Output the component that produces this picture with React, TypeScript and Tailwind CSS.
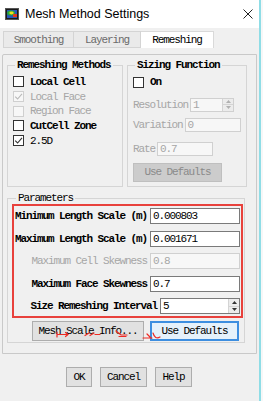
import type { ReactNode } from "react";

const txt = "font-['Liberation_Mono',monospace] text-[11px] tracking-[-1.1px] leading-[12px]";

function Check({ checked, disabled }: { checked?: boolean; disabled?: boolean }) {
  return (
    <span
      className={`flex h-[11px] w-[11px] shrink-0 items-center justify-center border ${
        disabled ? "border-[#cfcfcf] bg-[#f7f7f7]" : "border-[#333] bg-white"
      }`}
    >
      {checked && (
        <svg width="9" height="9" viewBox="0 0 9 9">
          <path
            d="M1.2 4.6 L3.6 7 L8 1.8"
            fill="none"
            stroke={disabled ? "#b9b9b9" : "#333"}
            strokeWidth="1.1"
          />
        </svg>
      )}
    </span>
  );
}

function CheckRow({
  label,
  checked,
  disabled,
  bold,
}: {
  label: string;
  checked?: boolean;
  disabled?: boolean;
  bold?: boolean;
}) {
  return (
    <div className="flex h-[14.7px] items-center gap-[6px]">
      <Check checked={checked} disabled={disabled} />
      <span className={`${txt} ${disabled ? "text-[#a6a6a6]" : "text-black"} ${bold ? "font-bold" : ""}`}>
        {label}
      </span>
    </div>
  );
}

function Spin({ disabled }: { disabled?: boolean }) {
  const c = disabled ? "#b0b0b0" : "#333";
  return (
    <div className="flex h-full w-[11px] flex-col border-l border-[#d4d4d4] bg-[#ececec]">
      <div className="flex flex-1 items-center justify-center border-b border-[#d4d4d4]">
        <svg width="5" height="3" viewBox="0 0 5 3">
          <path d="M0 3 L2.5 0 L5 3Z" fill={c} />
        </svg>
      </div>
      <div className="flex flex-1 items-center justify-center">
        <svg width="5" height="3" viewBox="0 0 5 3">
          <path d="M0 0 L2.5 3 L5 0Z" fill={c} />
        </svg>
      </div>
    </div>
  );
}

function Field({
  value,
  width,
  disabled,
  spin,
  h = "h-[16px]",
}: {
  value: string;
  width: string;
  disabled?: boolean;
  spin?: boolean;
  h?: string;
}) {
  return (
    <div
      className={`flex ${h} ${width} items-stretch border ${
        disabled ? "border-[#d0d0d0] bg-[#f7f7f7]" : "border-[#7a7a7a] bg-white"
      }`}
    >
      <span className={`${txt} flex flex-1 items-center pl-[2px] ${disabled ? "text-[#a6a6a6]" : "text-black"}`}>
        {value}
      </span>
      {spin && <Spin disabled={disabled} />}
    </div>
  );
}

function ParamRow({
  label,
  children,
  disabled,
}: {
  label: string;
  children: ReactNode;
  disabled?: boolean;
}) {
  return (
    <div className="flex items-center justify-end gap-[3px] pr-[1px]">
      <span className={`${txt} whitespace-nowrap ${disabled ? "text-[#a6a6a6]" : "font-bold text-black"}`}>
        {label}
      </span>
      {children}
    </div>
  );
}

function Btn({ children, w, focus }: { children: ReactNode; w: string; focus?: boolean }) {
  return (
    <div
      className={`flex h-[20px] ${w} items-center justify-center ${
        focus ? "border-2 border-[#3d8ee0] bg-[#e5f1fb]" : "border border-[#adadad] bg-[#e1e1e1]"
      }`}
    >
      <span className={`${txt} text-black`}>{children}</span>
    </div>
  );
}

export default function App() {
  return (
    <div className="relative flex h-[401px] w-[263px] bg-[#f0f0f0]">
      <div className="flex w-[259px] flex-col">
        {/* Title bar */}
        <div className="flex h-[28px] items-center bg-white pl-[5px]">
          <svg width="14" height="12" viewBox="0 0 14 12">
            <rect x="0" y="0" width="14" height="12" fill="#555" />
            <rect x="1" y="1" width="12" height="10" fill="#1a1a1a" />
            <rect x="2" y="2" width="10" height="8" fill="#2757b8" />
            <ellipse cx="6" cy="5" rx="4" ry="2.5" fill="#27a63a" />
            <ellipse cx="6.5" cy="5" rx="2.2" ry="1.4" fill="#f0e020" />
            <rect x="8" y="6" width="4" height="3" fill="#e23a1f" />
          </svg>
          <span className="ml-[6px] font-['Liberation_Sans',sans-serif] text-[12.5px] text-black">
            Mesh Method Settings
          </span>
          <svg className="ml-auto mr-[6px]" width="10" height="10" viewBox="0 0 10 10">
            <path d="M0.5 0.5 L9.5 9.5 M9.5 0.5 L0.5 9.5" stroke="#222" strokeWidth="1" />
          </svg>
        </div>

        {/* Tabs */}
        <div className="mt-[3px] flex h-[17px] pl-[3px]">
          <div className="flex w-[71px] items-center justify-center border border-[#d4d4d4] bg-[#eaeaea]">
            <span className={`${txt} text-[#6a6a6a]`}>Smoothing</span>
          </div>
          <div className="flex w-[67px] items-center justify-center border border-l-0 border-[#d4d4d4] bg-[#eaeaea]">
            <span className={`${txt} text-[#6a6a6a]`}>Layering</span>
          </div>
          <div className="flex w-[73px] items-center justify-center border border-b-0 border-l-0 border-[#d9d9d9] bg-white">
            <span className={`${txt} text-black`}>Remeshing</span>
          </div>
        </div>

        {/* Tab body frame */}
        <div className="ml-[2px] mt-[6px] flex h-[300px] w-[255px] flex-col rounded-tl-[2px] border border-[#c9c9c9] pl-[4px] pt-[4px]">
          <div className="flex gap-[4px]">
            <fieldset className="h-[128px] w-[116px] border border-[#d5d5d5] px-[5px]">
              <legend className={`${txt} ml-[2px] px-[2px] font-bold text-black`}>Remeshing Methods</legend>
              <div className="flex flex-col pt-[3.5px]">
                <CheckRow label="Local Cell" bold />
                <CheckRow label="Local Face" checked disabled />
                <CheckRow label="Region Face" disabled />
                <CheckRow label="CutCell Zone" bold />
                <CheckRow label="2.5D" checked />
              </div>
            </fieldset>

            <fieldset className="h-[128px] w-[118px] border border-[#d5d5d5] px-[5px]">
              <legend className={`${txt} ml-[2px] px-[2px] font-bold text-black`}>Sizing Function</legend>
              <div className="flex flex-col pt-[4px]">
                <CheckRow label="On" bold />
                <div className="mt-[8px] flex h-[14px] items-center gap-[2px]">
                  <span className={`${txt} text-[#a6a6a6]`}>Resolution</span>
                  <Field value="1" width="w-[44px]" h="h-[14px]" disabled spin />
                </div>
                <div className="mt-[6px] flex h-[14px] items-center gap-[2px]">
                  <span className={`${txt} text-[#a6a6a6]`}>Variation</span>
                  <Field value="0" width="w-[56px]" h="h-[14px]" disabled />
                </div>
                <div className="mt-[10px] flex h-[14px] items-center gap-[2px]">
                  <span className={`${txt} text-[#a6a6a6]`}>Rate</span>
                  <Field value="0.7" width="w-[56px]" h="h-[14px]" disabled />
                </div>
                <div className="mt-[7px] flex h-[19px] w-[89px] items-center justify-center border border-[#bfbfbf] bg-[#cccccc]">
                  <span className={`${txt} text-[#8a8a8a]`}>Use Defaults</span>
                </div>
              </div>
            </fieldset>
          </div>

          <fieldset className="mt-[5px] h-[151px] w-[238px] border border-[#d5d5d5] pl-[4px] pr-[1px]">
            <legend className={`${txt} ml-[4px] px-[2px] text-black`}>Parameters</legend>
            <div className="flex w-[231px] flex-col gap-[6.5px] border-2 border-[#e8413c] py-[2px]">
              <ParamRow label="Minimum Length Scale (m)">
                <Field value="0.000803" width="w-[90px]" />
              </ParamRow>
              <ParamRow label="Maximum Length Scale (m)">
                <Field value="0.001671" width="w-[90px]" />
              </ParamRow>
              <ParamRow label="Maximum Cell Skewness" disabled>
                <Field value="0.8" width="w-[90px]" disabled />
              </ParamRow>
              <ParamRow label="Maximum Face Skewness">
                <Field value="0.7" width="w-[90px]" />
              </ParamRow>
              <ParamRow label="Size Remeshing Interval">
                <Field value="5" width="w-[80px]" spin />
              </ParamRow>
            </div>
            <div className="mt-[3px] flex gap-[6px] pl-[20px]">
              <Btn w="w-[112px]">Mesh Scale Info...</Btn>
              <Btn w="w-[89px]" focus>
                Use Defaults
              </Btn>
            </div>
          </fieldset>
        </div>

        {/* Dialog buttons */}
        <div className="mt-[13px] flex justify-center gap-[8px] pr-[1px]">
          <Btn w="w-[26px]">OK</Btn>
          <Btn w="w-[47px]">Cancel</Btn>
          <Btn w="w-[37px]">Help</Btn>
        </div>
      </div>
      <div className="h-full w-[2px] bg-[#8fdde6]" />
      <div className="h-full w-[2px] bg-[#f7f7f7]" />

      {/* red hand-drawn marks */}
      <svg className="pointer-events-none absolute left-0 top-0" width="263" height="401" viewBox="0 0 263 401">
        <g fill="none" stroke="#ee2a24" strokeWidth="1.2" strokeLinecap="round">
          <path d="M57 332 V337 M57 334.5 H68 M65.5 332.5 L68 334.5 L65.5 336.5" />
          <path d="M85 335.5 L89 333 M90 335.5 L94 333 M95 334.5 H100" />
          <path d="M116 331 L121 335 H127 M119 336.5 H126" />
          <path d="M147 334 L151 338 M143 338 H152 M153 333 Q155 340 160 337" />
        </g>
      </svg>
    </div>
  );
}
